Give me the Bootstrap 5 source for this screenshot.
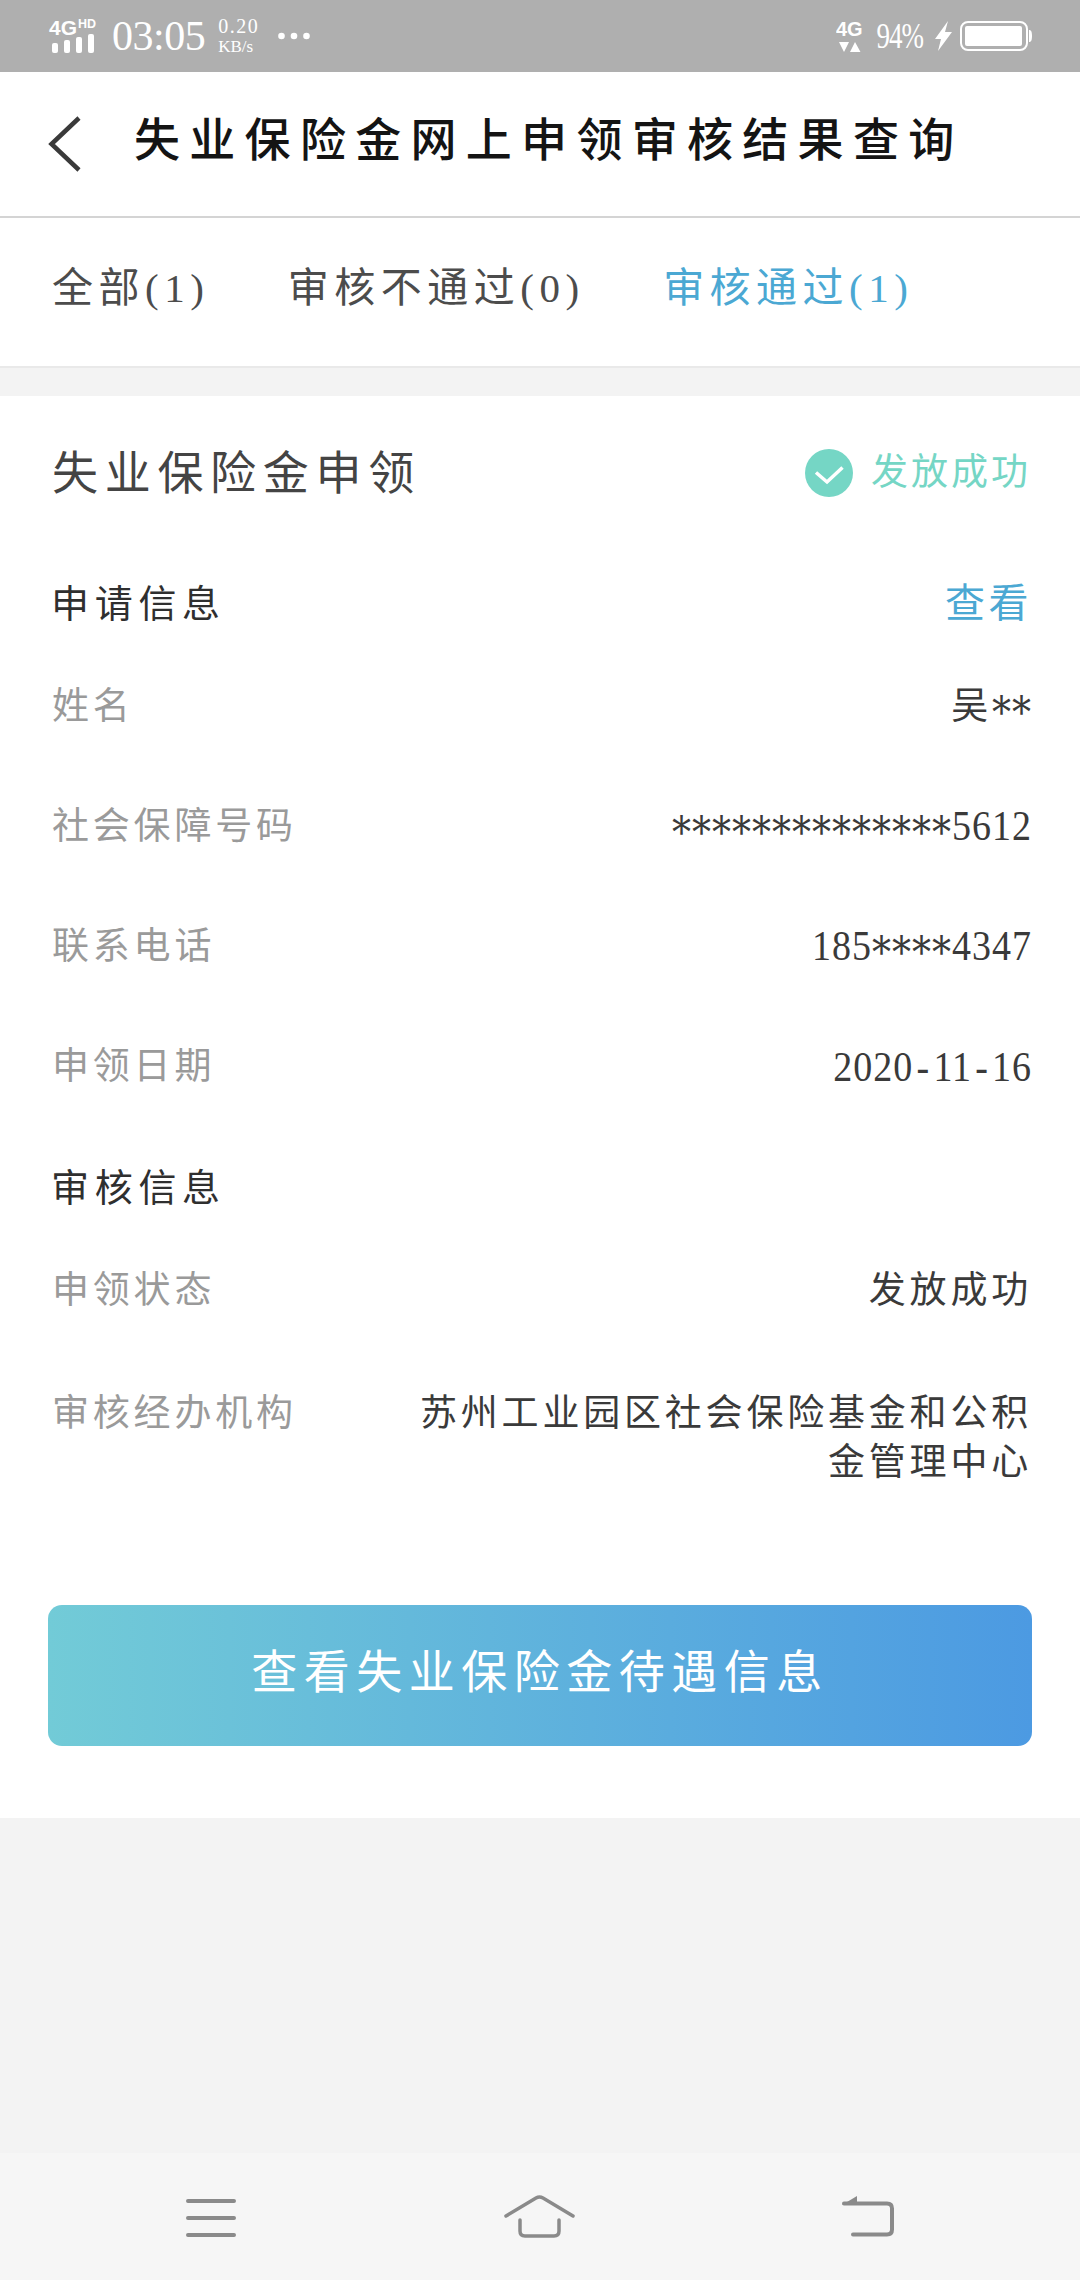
<!doctype html>
<html lang="zh"><head><meta charset="utf-8"><title>失业保险金网上申领审核结果查询</title>
<link rel="stylesheet" href="https://cdn.jsdelivr.net/npm/bootstrap@5.3.0/dist/css/bootstrap.min.css">
<style>
html,body{height:2280px}
body{background:#f3f3f3;font-family:"Liberation Serif","Noto Sans CJK SC",serif;color:#333;width:1080px;overflow:hidden}
.page{height:2280px}
.sbar{height:72px;background:#afafaf;color:#fff;padding:0 48px}
.s-time{font-size:42px;letter-spacing:-.5px;line-height:1;margin:0 13px}
.s-speed{display:flex;flex-direction:column;width:40px;margin-right:20px}
.s-up{font-size:20px;line-height:22px;letter-spacing:1.5px}
.s-kb{font-size:17px;line-height:20px}
.s-pct{font-size:27px;letter-spacing:-1px;transform:scaleY(1.3);margin:0 12px 0 13px;line-height:1}
.ic{display:block;flex:none}
.tbar{height:146px;background:#fff;border-bottom:2px solid #d4d4d4;padding-left:47px}
.tbar h1{font-family:"Noto Sans CJK SC",sans-serif;font-size:46px;letter-spacing:9.300px;margin:0 0 0 51px;padding-bottom:14px;color:#141414;font-weight:500}
.tabs{height:150px;background:#fff;border-bottom:2px solid #e9e9e9;padding:0 0 7px 52px;gap:78.500px;font-size:41px;letter-spacing:5.500px;color:#4c4c4c}
.tab-on{color:#4ba8d3}
.panel{margin-top:28px;height:1422px;background:#fff;padding:0 48px}
.p-head{height:154px;padding-left:4px}
.p-title{font-size:46px;letter-spacing:6.7px;color:#444}
.p-ok{font-size:37px;letter-spacing:3px;color:#75d6c5;gap:18px;margin-right:1px}
.sec{font-size:38px;letter-spacing:5.700px;color:#2f2f2f;height:80px;padding-left:3px;margin-bottom:3px}
.sec-a{margin-top:14px}
.sec-b{margin-top:21px}
.more{color:#4ba8d3;font-size:40px;letter-spacing:3.500px}
.itm{height:120px;font-size:37px;letter-spacing:3.800px;padding-left:4px}
.itm-k{color:#9a9a9a;flex:none}
.itm-v{color:#3a3a3a;text-align:right}
.num{display:inline-block;letter-spacing:1px;font-size:38px;line-height:49px;transform:scaleY(1.12)}
.stars{font-family:"DejaVu Serif",serif;vertical-align:-6px;line-height:0}
.hy{margin:0 3.200px}
.itm-top{height:auto;padding-top:38px;line-height:49px}
.cta{display:block;width:100%;height:141px;border:0;border-radius:14px;background:linear-gradient(90deg,#72cbd7,#4c9ae2);color:#fff;font-family:"Noto Sans CJK SC",sans-serif;font-size:46px;letter-spacing:6.500px;margin-top:118px;padding:0 0 15px}
.botnav{height:127px;background:#f6f6f6;padding:0 186px}
</style></head><body>
<div class="page d-flex flex-column">
<div class="sbar d-flex align-items-center justify-content-between">
 <div class="d-flex align-items-center">
  <svg class="ic" width="51" height="44" viewBox="0 -4 51 44" role="img" aria-label="4G HD信号"><text x="1" y="17" font-family="Liberation Sans" font-weight="700" font-size="21" fill="#fff">4G</text><text x="30" y="10" font-family="Liberation Sans" font-weight="700" font-size="12.500" fill="#fff">HD</text><g fill="#fff"><rect x="4" y="25" width="6" height="10" rx="2"/><rect x="16" y="22" width="6" height="13" rx="2"/><rect x="28" y="19" width="6" height="16" rx="2"/><rect x="40" y="16" width="6" height="19" rx="2"/></g></svg>
  <span class="s-time">03:05</span>
  <span class="s-speed text-nowrap"><span class="s-up">0.20</span><span class="s-kb">KB/s</span></span>
  <svg class="ic" width="32" height="10" viewBox="0 0 32 10" aria-hidden="true"><g fill="#fff"><circle cx="3.500" cy="5" r="3.300"/><circle cx="16" cy="5" r="3.300"/><circle cx="28.500" cy="5" r="3.300"/></g></svg>
 </div>
 <div class="d-flex align-items-center">
  <svg class="ic" width="28" height="36" viewBox="0 0 28 36" role="img" aria-label="4G"><text x="0" y="18" font-family="Liberation Sans" font-weight="700" font-size="20" fill="#fff">4G</text><path d="M3 24h10l-5 10zM14 34l5-10 5.500 10z" fill="#fff"/></svg>
  <span class="s-pct">94%</span>
  <svg class="ic" width="17" height="30" viewBox="0 0 17 30" aria-hidden="true"><path d="M13 0 0 18h6L3 30 17 11h-7z" fill="#fff"/></svg>
  <svg class="ic ms-2" width="72" height="30" viewBox="0 0 72 30" aria-hidden="true"><rect x="1" y="1" width="66" height="28" rx="7" fill="none" stroke="#fff" stroke-width="2"/><rect x="5" y="5" width="57" height="20" rx="2" fill="#fff"/><path d="M69 9c2 0 3 1.500 3 6s-1 6-3 6z" fill="#fff"/></svg>
 </div>
</div>
<header class="tbar d-flex align-items-center">
 <svg class="ic" width="36" height="56" viewBox="0 0 36 56" role="img" aria-label="返回"><path d="M32 2 4.500 28 32 54" fill="none" stroke="#3a3a3a" stroke-width="4.500"/></svg>
 <h1 class="text-nowrap">失业保险金网上申领审核结果查询</h1>
</header>
<nav class="tabs d-flex align-items-center text-nowrap"><span>全部(1)</span><span>审核不通过(0)</span><span class="tab-on">审核通过(1)</span></nav>
<main class="panel">
 <div class="p-head d-flex align-items-center justify-content-between">
  <div class="p-title">失业保险金申领</div>
  <div class="p-ok d-flex align-items-center">
   <svg class="ic" width="48" height="48" viewBox="0 0 48 48" aria-hidden="true"><circle cx="24" cy="24" r="24" fill="#75d6c5"/><path d="M11 23.500l11 9.500 15.500-14.500" fill="none" stroke="#fff" stroke-width="3.500"/></svg>
   <span>发放成功</span>
  </div>
 </div>
 <div class="sec sec-a d-flex align-items-center justify-content-between"><span>申请信息</span><span class="more">查看</span></div>
 <div class="itm d-flex align-items-center justify-content-between"><span class="itm-k">姓名</span><span class="itm-v">吴<span class="num"><span class="stars">**</span></span></span></div>
 <div class="itm d-flex align-items-center justify-content-between"><span class="itm-k">社会保障号码</span><span class="itm-v"><span class="num"><span class="stars">**************</span>5612</span></span></div>
 <div class="itm d-flex align-items-center justify-content-between"><span class="itm-k">联系电话</span><span class="itm-v"><span class="num">185<span class="stars">****</span>4347</span></span></div>
 <div class="itm d-flex align-items-center justify-content-between"><span class="itm-k">申领日期</span><span class="itm-v"><span class="num">2020<span class="hy">-</span>11<span class="hy">-</span>16</span></span></div>
 <div class="sec sec-b d-flex align-items-center">审核信息</div>
 <div class="itm d-flex align-items-center justify-content-between"><span class="itm-k">申领状态</span><span class="itm-v">发放成功</span></div>
 <div class="itm itm-top d-flex align-items-start justify-content-between"><span class="itm-k">审核经办机构</span><span class="itm-v">苏州工业园区社会保险基金和公积<br>金管理中心</span></div>
 <button type="button" class="cta">查看失业保险金待遇信息</button>
</main>
<nav class="botnav mt-auto d-flex align-items-center justify-content-between" aria-label="系统导航">
 <svg class="ic" width="50" height="44" viewBox="0 0 50 44" role="img" aria-label="菜单"><g stroke="#8a8a8a" stroke-width="4" stroke-linecap="round"><path d="M2 6h46M2 23h46M2 40h46"/></g></svg>
 <svg class="ic" width="72" height="44" viewBox="0 0 72 44" role="img" aria-label="主页"><g fill="none" stroke="#8a8a8a" stroke-width="3.500" stroke-linecap="round" stroke-linejoin="round"><path d="M3 21 33 3q3.500-2 7 0l30 18"/><path d="M17 25v11q0 5 5 5h29q5 0 5-5V25"/></g></svg>
 <svg class="ic" width="52" height="44" viewBox="0 0 52 44" role="img" aria-label="返回"><path d="M15 1 0 10h15z" fill="#8a8a8a"/><path d="M2 8.500h43q5 0 5 5v21q0 5-5 5H11" fill="none" stroke="#8a8a8a" stroke-width="4" stroke-linecap="round"/></svg>
</nav>
</div>
</body></html>
